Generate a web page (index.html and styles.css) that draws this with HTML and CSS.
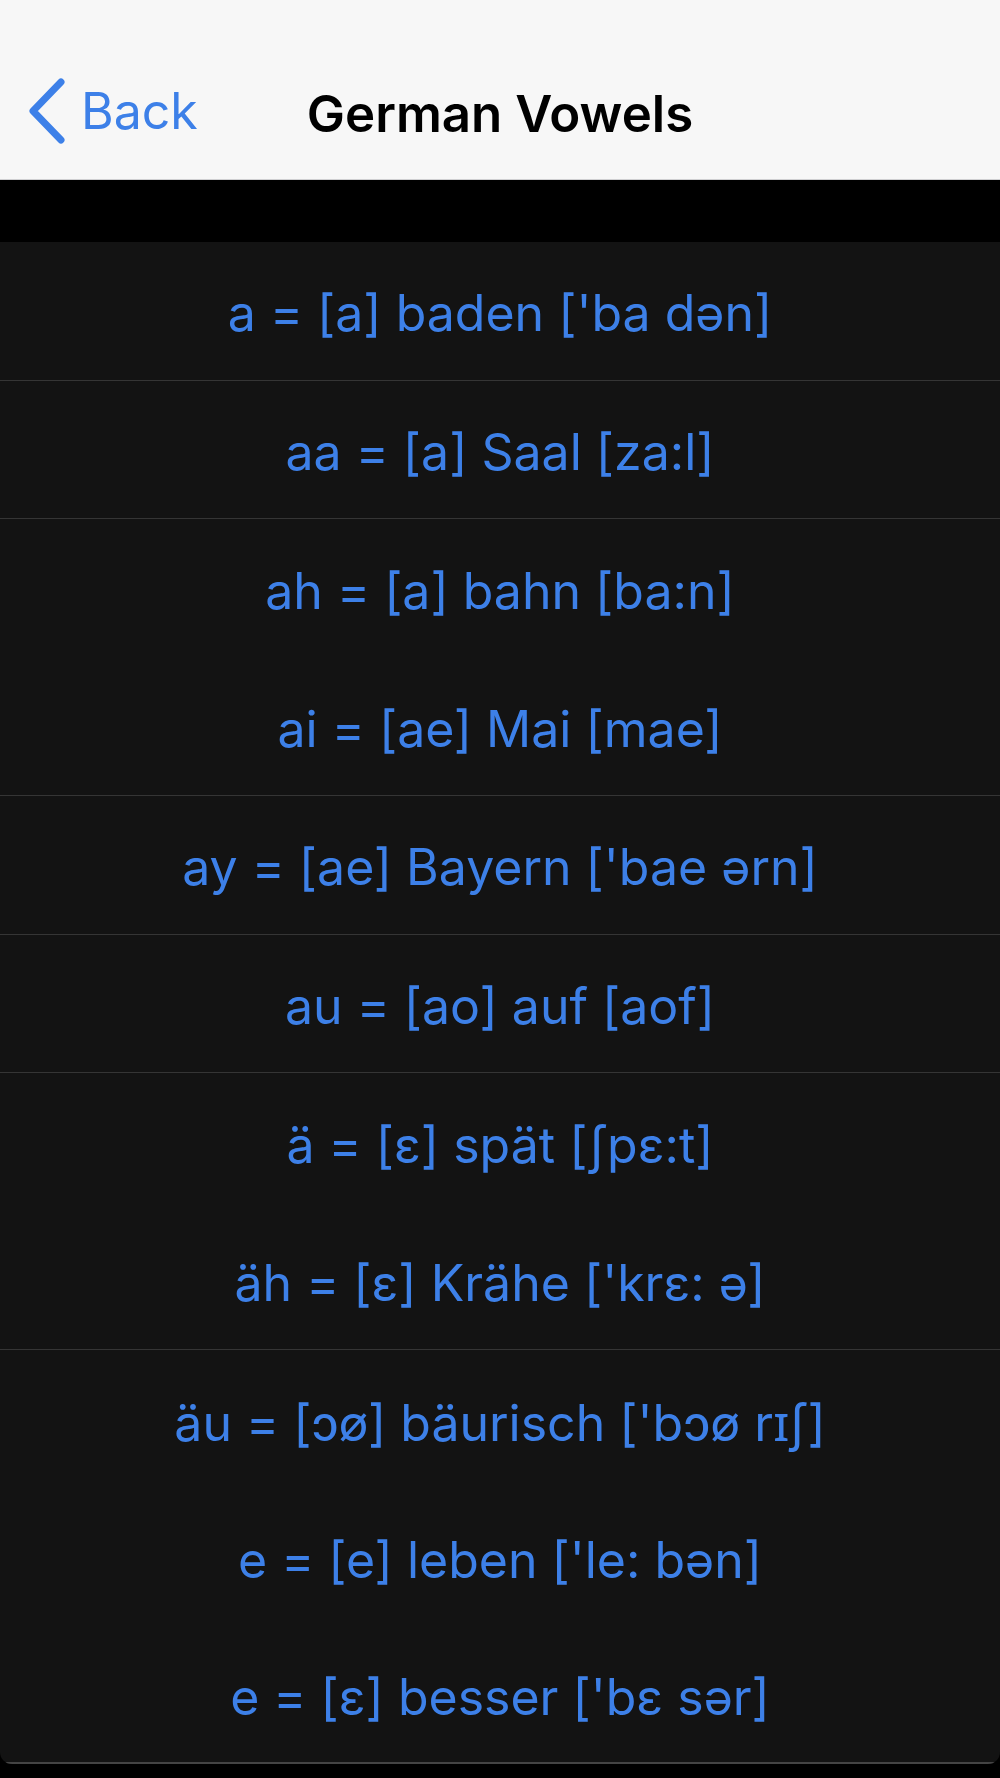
FILE: index.html
```html
<!DOCTYPE html>
<html>
<head>
<meta charset="utf-8">
<link rel="stylesheet" href="styles.css">
</head>
<body>
<div class="nav">
  <div class="back">
    <svg class="chev" width="40" height="66" viewBox="0 0 40 66"><path d="M34 4 L6 33 L34 62" fill="none" stroke="#3d80e8" stroke-width="7" stroke-linecap="round" stroke-linejoin="round"/></svg>
    <span class="back-label">Back</span>
  </div>
  <div class="title">German Vowels</div>
</div>
<div class="gap"></div>
<div class="list">
  <div class="row sep">a = [a] baden ['ba dən]</div>
  <div class="row sep">aa = [a] Saal [za:l]</div>
  <div class="row">ah = [a] bahn [ba:n]</div>
  <div class="row sep">ai = [ae] Mai [mae]</div>
  <div class="row sep">ay = [ae] Bayern ['bae ərn]</div>
  <div class="row sep">au = [ao] auf [aof]</div>
  <div class="row">ä = [ɛ] spät [ʃpɛ:t]</div>
  <div class="row sep">äh = [ɛ] Krähe ['krɛ: ə]</div>
  <div class="row">äu = [ɔø] bäurisch ['bɔø rɪʃ]</div>
  <div class="row">e = [e] leben ['le: bən]</div>
  <div class="row last">e = [ɛ] besser ['bɛ sər]</div>
</div>
</body>
</html>
```
FILE: styles.css
```css
html, body {
  margin: 0;
  padding: 0;
  background: #000;
}
body {
  width: 1000px;
  height: 1778px;
  overflow: hidden;
  font-family: "Inter", "Noto Sans", sans-serif;
}
.nav {
  height: 180px;
  background: #f7f7f7;
  border-bottom: 1px solid #cfcfd1;
  position: relative;
  display: flex;
  align-items: flex-end;
  justify-content: center;
  padding-bottom: 35px;
  box-sizing: border-box;
}
.back {
  position: absolute;
  left: 27px;
  top: 78px;
  display: flex;
  align-items: center;
  gap: 14px;
}
.chev {
  display: block;
}
.back-label {
  color: #3d80e8;
  font-size: 50px;
  line-height: 66px;
}
.title {
  color: #000;
  font-size: 51px;
  font-weight: 600;
  line-height: 60px;
}
.gap {
  height: 62px;
}
.list {
  background: #131313;
  border-radius: 0 0 12px 12px;
  overflow: hidden;
}
.row {
  height: 138.5px;
  display: flex;
  align-items: center;
  justify-content: center;
  color: #3d80e8;
  font-size: 50px;
  padding-top: 5px;
  box-sizing: border-box;
}
.row.sep {
  border-bottom: 1px solid #353535;
}
.row.last {
  height: 137px;
  border-bottom: 2px solid #444;
}
```
